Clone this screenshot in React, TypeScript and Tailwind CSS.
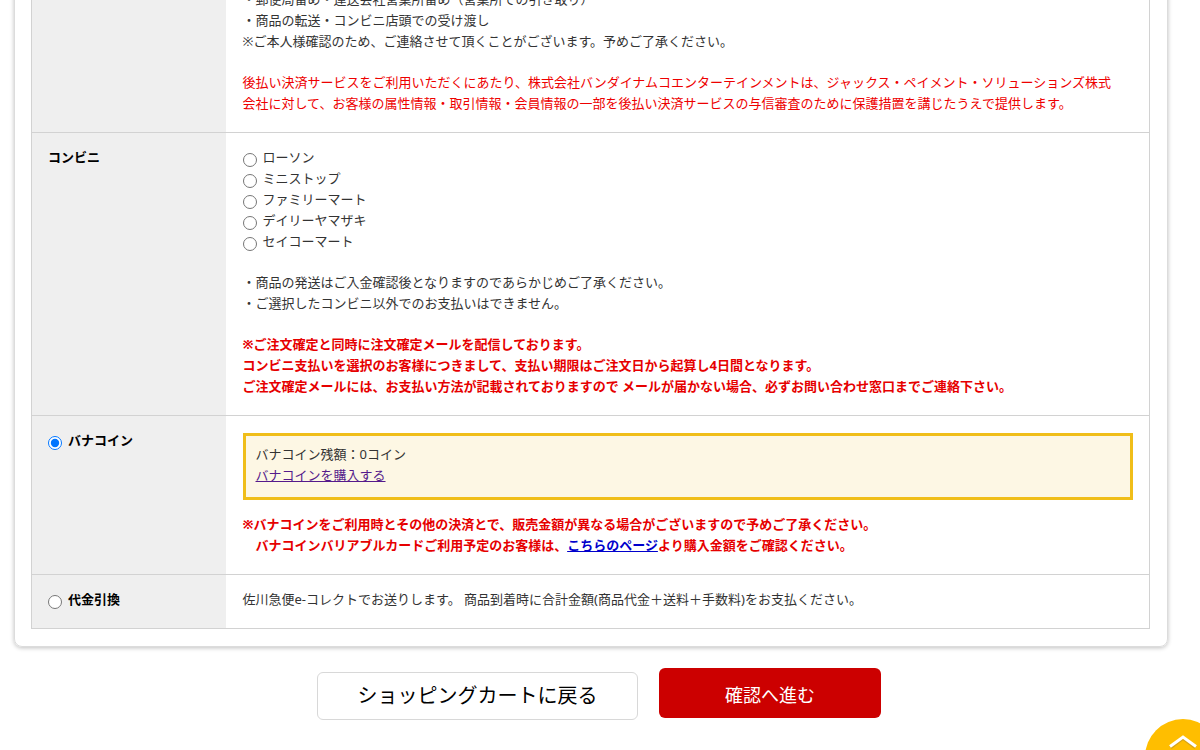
import { useState } from "react";
import type { ReactNode } from "react";

const stores = [
  "ローソン",
  "ミニストップ",
  "ファミリーマート",
  "デイリーヤマザキ",
  "セイコーマート",
];

type RowProps = {
  head?: ReactNode;
  children: ReactNode;
};

const Row = ({ head, children }: RowProps) => {
  return (
    <tr className="border-b border-[#d2d2d2]">
      <th
        scope="row"
        className="w-[194px] bg-[#efefef] px-4 pt-[14px] pb-[18px] text-left align-top font-bold text-black"
      >
        {head}
      </th>
      <td className="pt-[14px] pr-4 pb-[18px] pl-[17px] align-top">
        {children}
      </td>
    </tr>
  );
};

type RadioProps = {
  name: string;
  label: string;
  checked?: boolean;
  onChange?: () => void;
};

const Radio = ({ name, label, checked, onChange }: RadioProps) => {
  return (
    <label className="flex w-fit items-start gap-[6px]">
      <input
        type="radio"
        name={name}
        value={label}
        checked={checked}
        onChange={onChange}
        className="mt-[6px] h-[14px] w-[14px] shrink-0"
      />
      <span>{label}</span>
    </label>
  );
};

const App = () => {
  const [payment, setPayment] = useState("バナコイン");
  const [store, setStore] = useState("");

  return (
    <div className="min-h-screen overflow-hidden bg-white font-['Noto_Sans','Noto_Sans_CJK_JP',sans-serif] text-[13px] leading-[21px] text-[#333]">
      <main lang="ja">
        <section className="-mt-[27px] mr-8 ml-[14px] rounded-lg border border-[#dcdcdc] pr-[17px] pb-[17px] pl-4 shadow-[0_1px_4px_rgba(0,0,0,0.25)]">
          <table className="w-full table-fixed border-collapse border border-[#d2d2d2]">
            <tbody>
              <Row>
                <p>
                  ・郵便局留め・運送会社営業所留め（営業所での引き取り）
                  <br />
                  ・商品の転送・コンビニ店頭での受け渡し
                  <br />
                  ※ご本人様確認のため、ご連絡させて頂くことがございます。予めご了承ください。
                </p>
                <p className="mt-5 text-[#ee0000]">
                  後払い決済サービスをご利用いただくにあたり、株式会社バンダイナムコエンターテインメントは、ジャックス・ペイメント・ソリューションズ株式
                  <br />
                  会社に対して、お客様の属性情報・取引情報・会員情報の一部を後払い決済サービスの与信審査のために保護措置を講じたうえで提供します。
                </p>
              </Row>

              <Row head="コンビニ">
                {stores.map((name) => (
                  <Radio
                    key={name}
                    name="store"
                    label={name}
                    checked={store === name}
                    onChange={() => setStore(name)}
                  />
                ))}
                <p className="mt-5">
                  ・商品の発送はご入金確認後となりますのであらかじめご了承ください。
                  <br />
                  ・ご選択したコンビニ以外でのお支払いはできません。
                </p>
                <p className="mt-5 font-bold text-[#e60000]">
                  ※ご注文確定と同時に注文確定メールを配信しております。
                  <br />
                  コンビニ支払いを選択のお客様につきまして、支払い期限はご注文日から起算し4日間となります。
                  <br />
                  ご注文確定メールには、お支払い方法が記載されておりますので
                  メールが届かない場合、必ずお問い合わせ窓口までご連絡下さい。
                </p>
              </Row>

              <Row
                head={
                  <Radio
                    name="payment"
                    label="バナコイン"
                    checked={payment === "バナコイン"}
                    onChange={() => setPayment("バナコイン")}
                  />
                }
              >
                <div className="mt-[3px] border-[3px] border-[#f0be19] bg-[#fdf7e4] px-[10px] pt-2 pb-[11px]">
                  <p>バナコイン残額：0コイン</p>
                  <a href="#" className="text-[#551a8b] underline">
                    バナコインを購入する
                  </a>
                </div>
                <p className="mt-[14px] font-bold text-[#e60000]">
                  ※バナコインをご利用時とその他の決済とで、販売金額が異なる場合がございますので予めご了承ください。
                  <br />
                  {"\u3000"}バナコインバリアブルカードご利用予定のお客様は、
                  <a href="#" className="text-[#0000cc] underline">
                    こちらのページ
                  </a>
                  より購入金額をご確認ください。
                </p>
              </Row>

              <Row
                head={
                  <Radio
                    name="payment"
                    label="代金引換"
                    checked={payment === "代金引換"}
                    onChange={() => setPayment("代金引換")}
                  />
                }
              >
                <p>
                  佐川急便e-コレクトでお送りします。
                  商品到着時に合計金額(商品代金＋送料＋手数料)をお支払ください。
                </p>
              </Row>
            </tbody>
          </table>
        </section>

        <div className="mt-[21px] flex items-start justify-center gap-[21px] pr-0.5 pb-8">
          <button
            type="button"
            className="mt-1 h-12 w-[321px] rounded-md border border-[#d8d8d8] bg-white text-xl text-black"
          >
            ショッピングカートに戻る
          </button>
          <button
            type="submit"
            className="h-[50px] w-[222px] rounded-md bg-[#cc0000] pt-1 text-lg text-white"
          >
            確認へ進む
          </button>
        </div>
      </main>

      <button
        type="button"
        aria-label="ページの先頭へ"
        onClick={() => window.scrollTo({ top: 0 })}
        className="fixed -right-[21px] -bottom-[45px] h-[76px] w-[76px] rounded-full bg-[#ffbe00]"
      >
        <svg viewBox="0 0 76 76" className="h-full w-full" fill="none">
          <path d="M25.5 28.5 38 19l12.5 9.5" stroke="#d9a514" strokeWidth="3.5" />
          <path d="M25 27.5 38 18l13 9.5" stroke="#fff" strokeWidth="3" />
        </svg>
      </button>
    </div>
  );
};

export default App;
